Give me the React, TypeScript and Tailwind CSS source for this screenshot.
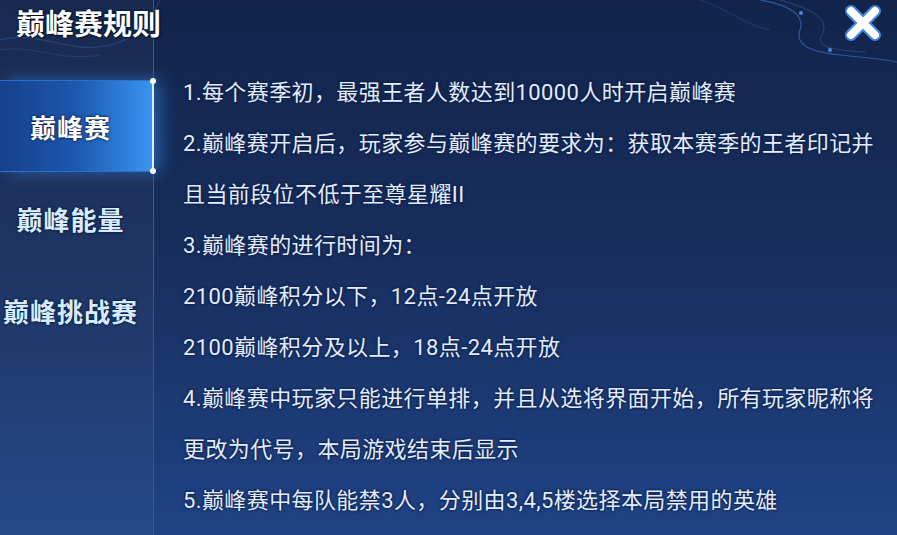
import React, { useState } from 'react';

const tabs = ['巅峰赛', '巅峰能量', '巅峰挑战赛'];

const rules: string[][] = [
    ['1.每个赛季初，最强王者人数达到10000人时开启巅峰赛'],
    ['2.巅峰赛开启后，玩家参与巅峰赛的要求为：获取本赛季的王者印记并', '且当前段位不低于至尊星耀II'],
    ['3.巅峰赛的进行时间为：'],
    ['2100巅峰积分以下，12点-24点开放'],
    ['2100巅峰积分及以上，18点-24点开放'],
    ['4.巅峰赛中玩家只能进行单排，并且从选将界面开始，所有玩家昵称将', '更改为代号，本局游戏结束后显示'],
    ['5.巅峰赛中每队能禁3人，分别由3,4,5楼选择本局禁用的英雄'],
];

const CloseIcon: React.FC = () => (
    <svg width="42" height="42" viewBox="0 0 42 42">
        <g strokeLinecap="round">
            <path d="M9 9 L33 33 M33 9 L9 33" stroke="#3f86e0" strokeWidth="12" />
            <path d="M9 9 L33 33 M33 9 L9 33" stroke="#ffffff" strokeWidth="8" />
        </g>
    </svg>
);

const Swirls: React.FC = () => (
    <svg className="absolute inset-0 pointer-events-none" width="897" height="535" viewBox="0 0 897 535" fill="none">
        {/* top left swirl behind the title */}
        <path d="M0 40 C40 30 70 55 110 45 C140 38 150 20 160 0" stroke="#2c5aa0" strokeOpacity="0.5" strokeWidth="1.2" />
        <path d="M0 50 C30 44 60 62 100 55" stroke="#2c5aa0" strokeOpacity="0.35" strokeWidth="1" />
        {/* top right swirl */}
        <path d="M760 0 C790 5 805 15 800 30 C795 45 810 52 840 55 C870 58 890 60 897 62" stroke="#3b6fc0" strokeOpacity="0.7" strokeWidth="1.2" />
        <path d="M780 0 C815 10 830 20 822 35 C815 48 835 50 865 52" stroke="#3b6fc0" strokeOpacity="0.45" strokeWidth="1" />
        <path d="M700 0 C730 10 745 25 770 30" stroke="#3b6fc0" strokeOpacity="0.3" strokeWidth="1" />
        <circle cx="801" cy="13" r="2" fill="#4a86d8" />
        <circle cx="830" cy="50" r="2" fill="#4a86d8" />
    </svg>
);

const App: React.FC = () => {
    const [active, setActive] = useState(0);

    return (
        <div className="relative w-[897px] h-[535px] overflow-hidden bg-linear-to-b from-[#12244b] via-[#182f5f] to-[#1f4385] font-['Noto_Sans_CJK_SC','Noto_Sans',sans-serif]">
            <Swirls />

            <div className="relative flex h-full">
                {/* Sidebar */}
                <aside className="w-[154px] shrink-0 border-r border-[#2b5ba4] bg-[#ffffff08] flex flex-col">
                    <div className="h-[80px] pl-[16px] pt-[2px]">
                        <h1 className="whitespace-nowrap text-[29px] font-bold leading-[40px] text-white [text-shadow:0_0_2px_#06142f,0_0_3px_#06142f,1px_1px_1px_#06142f]">
                            巅峰赛规则
                        </h1>
                    </div>
                    {tabs.map((tab, i) => {
                        const isActive = i === active;
                        return (
                            <button
                                key={tab}
                                onClick={() => setActive(i)}
                                className={`relative h-[92px] w-full pr-[12px] flex items-center justify-center whitespace-nowrap text-[26px] font-bold tracking-[1px] ${
                                    isActive
                                        ? 'bg-linear-to-r from-[#16408a] via-[#1d58b0] to-[#3a96f2] text-white border-y border-[#2f6fc4] shadow-[8px_0_16px_rgba(60,150,255,0.45)] [text-shadow:0_0_2px_#06204f,0_0_3px_#06204f]'
                                        : 'text-[#d9ecff] [text-shadow:0_0_2px_#071a3f,0_0_3px_#071a3f]'
                                }`}
                            >
                                {tab}
                                {isActive && (
                                    <>
                                        <span className="absolute right-[-1px] top-0 bottom-0 w-[2px] bg-[#d8efff]" />
                                        <span className="absolute right-[-3px] top-[-3px] w-[6px] h-[6px] rounded-full bg-white" />
                                        <span className="absolute right-[-3px] bottom-[-3px] w-[6px] h-[6px] rounded-full bg-white" />
                                    </>
                                )}
                            </button>
                        );
                    })}
                </aside>

                {/* Rules */}
                <main className="flex-1 pl-[29px] pt-[67px] font-['Roboto','Noto_Sans_CJK_SC',sans-serif]">
                    {rules.map((rule, i) => (
                        <div key={i}>
                            {rule.map((line, j) => (
                                <p
                                    key={j}
                                    className="whitespace-nowrap text-[22px] leading-[51px] tracking-[0.4px] text-[#e3edff] [text-shadow:0_0_2px_#0a1c44,0_0_3px_#0a1c44]"
                                >
                                    {line}
                                </p>
                            ))}
                        </div>
                    ))}
                </main>
            </div>

            <button className="absolute left-[842px] top-[2px]">
                <CloseIcon />
            </button>
        </div>
    );
};

export default App;
